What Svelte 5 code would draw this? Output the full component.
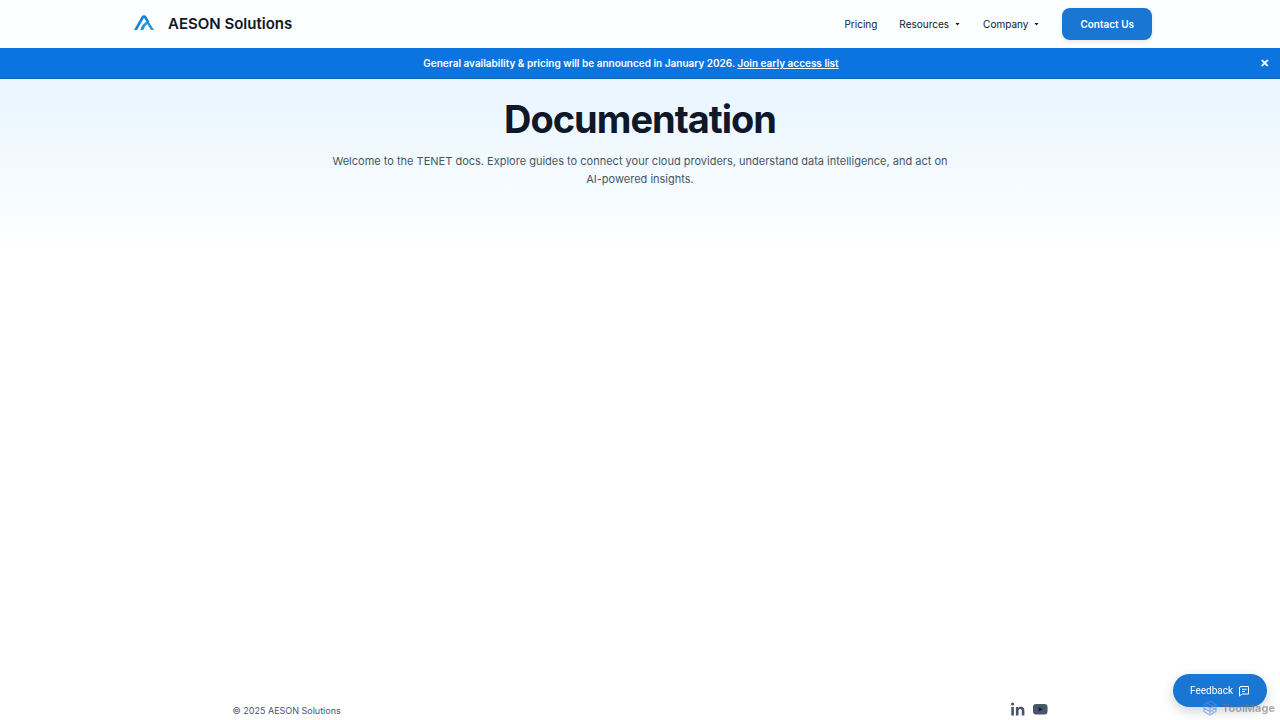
<script lang="ts">
  let bannerOpen = $state(true);

  const menus = ['Resources', 'Company'];
</script>

<div class="page">
  <header class="header">
    <nav class="nav" aria-label="Main">
      <a class="brand" href="/">
        <svg class="logo" viewBox="0 0 20 16" aria-hidden="true">
          <path
            d="M0 15 7.600 1.600Q8.400.3 10 .3t2.400 1.300L15.600 7l-2.700.5L10.300 3.200Q10 2.700 9.700 3.200L3 15z"
            fill="#1683d8"
          />
          <path
            d="M6.400 15Q7.600 8.700 14.200 6L20 15h-3L13.300 9.100Q10 11 9.300 15z"
            fill="#2194dc"
          />
        </svg>
        <span>AESON Solutions</span>
      </a>
      <div class="links">
        <a class="link" href="/pricing">Pricing</a>
        {#each menus as menu}
          <button class="link" type="button" aria-haspopup="true">
            {menu}
            <svg class="caret" viewBox="0 0 7 3" aria-hidden="true">
              <path d="M1.500 0h4l-2 2.500z" fill="currentColor" />
            </svg>
          </button>
        {/each}
        <a class="contact" href="/contact">Contact Us</a>
      </div>
    </nav>
  </header>

  {#if bannerOpen}
    <div class="banner">
      <p>
        General availability &amp; pricing will be announced in January 2026.
        <a href="/early-access">Join early access list</a>
      </p>
      <button class="close" type="button" aria-label="Dismiss" onclick={() => (bannerOpen = false)}>
        ✕
      </button>
    </div>
  {/if}

  <main class="hero">
    <h1>Documentation</h1>
    <p>
      Welcome to the TENET docs. Explore guides to connect your cloud providers, understand data
      intelligence, and act on AI-powered insights.
    </p>
  </main>

  <footer class="footer">
    <div class="footer-inner">
      <span>© 2025 AESON Solutions</span>
      <div class="social">
        <a href="/linkedin" aria-label="LinkedIn">
          <svg viewBox="0 0 16 16" fill="currentColor" aria-hidden="true">
            <circle cx="2.6" cy="3" r="1.6" />
            <path d="M1.3 6h2.6v8.5H1.3zM5.9 6h2.5v1.2C9 6.300 9.900 5.800 11.100 5.800c2.600 0 3.300 1.700 3.300 4v4.700h-2.600v-4.200c0-1.200-.2-2.200-1.500-2.200s-1.800 1-1.800 2.200v4.200H5.900z" />
          </svg>
        </a>
        <a href="/youtube" aria-label="YouTube">
          <svg viewBox="0 0 16 16" aria-hidden="true">
            <rect x="1" y="3" width="14.500" height="10.500" rx="3" fill="currentColor" />
            <path d="m6.800 6 4 2.250-4 2.250z" fill="#101a2b" />
          </svg>
        </a>
      </div>
    </div>
  </footer>

  <button class="feedback" type="button">
    Feedback
    <svg viewBox="0 0 12 12" fill="none" stroke="currentColor" aria-hidden="true">
      <path d="M3 1.500h7.500V9H4L1.500 11V3q0-1.500 1.500-1.500zM4 4.300h4.700M4 6.500h3" />
    </svg>
  </button>

  <div class="watermark" aria-hidden="true">
    <svg viewBox="0 0 16 16" fill="none" stroke="#5b8def" stroke-width="1.300">
      <path d="M8 1 14 4.500v7L8 15l-6-3.500v-7zM2 4.500l6 3.500 6-3.500M8 8v7M5 2.800l6 3.500v6.900M2 8l6 3.500L14 8" />
    </svg>
    <span>ToolMage</span>
  </div>
</div>

<style>
  :global(body) {
    margin: 0;
    background: #fff;
  }

  .page {
    display: flex;
    flex-direction: column;
    min-height: 100vh;
    font-family: Inter, 'Liberation Sans', sans-serif;
    font-size: 10px;
    color: #0f172a;
  }

  .page a {
    color: inherit;
  }

  .page button {
    border: 0;
    padding: 0;
    background: none;
    font: inherit;
    color: inherit;
    cursor: pointer;
  }

  .header {
    background: #fcfeff;
  }

  .nav {
    display: flex;
    align-items: center;
    justify-content: space-between;
    box-sizing: border-box;
    max-width: 1024px;
    height: 48px;
    margin: 0 auto;
    padding-left: 6px;
  }

  .brand {
    display: flex;
    align-items: center;
    gap: 14px;
    font-size: 15px;
    font-weight: 600;
    line-height: 18px;
    text-decoration: none;
  }

  .logo {
    width: 20px;
    height: 16px;
    padding-bottom: 2px;
  }

  .links {
    display: flex;
    align-items: center;
    gap: 22px;
  }

  .link {
    display: flex;
    align-items: center;
    gap: 5px;
    text-decoration: none;
  }

  .caret {
    width: 7px;
    height: 3px;
  }

  .page .contact {
    padding: 0 18px;
    border-radius: 8px;
    background: #1976d2;
    box-shadow: 0 2px 4px rgba(15, 23, 42, 0.1);
    color: #fff;
    font-weight: 600;
    line-height: 32px;
    text-decoration: none;
  }

  .banner {
    display: flex;
    align-items: center;
    box-sizing: border-box;
    height: 31px;
    padding-right: 11px;
    border-bottom: 1px solid #0a63bd;
    background: #0b74de;
    color: #fff;
    font-weight: 600;
  }

  .banner p {
    flex: 1;
    margin: 0;
    padding-left: 3px;
    text-align: center;
  }

  .page .close {
    width: 10px;
    font-size: 11px;
    font-weight: 700;
  }

  .hero {
    flex: 1;
    padding: 20px 24px;
    background: linear-gradient(#e8f5ff, #fff 180px);
    text-align: center;
  }

  .hero h1 {
    margin: 0 0 13px;
    font-size: 38px;
    font-weight: 700;
    line-height: 40px;
    letter-spacing: -1px;
  }

  .hero p {
    max-width: 620px;
    margin: 0 auto;
    color: #475569;
    font-size: 11px;
    line-height: 18px;
  }

  .footer {
    padding: 0 24px;
    color: #475569;
    font-size: 9px;
  }

  .footer-inner {
    display: flex;
    align-items: center;
    justify-content: space-between;
    max-width: 815px;
    height: 20px;
    margin: 0 auto;
  }

  .social {
    display: flex;
    gap: 6px;
    padding-bottom: 2px;
  }

  .social svg {
    display: block;
    width: 16px;
    height: 16px;
  }

  .page .feedback {
    position: fixed;
    right: 13px;
    bottom: 13px;
    display: flex;
    align-items: center;
    gap: 5px;
    height: 33px;
    padding: 0 17px;
    border-radius: 17px;
    background: #1976d2;
    box-shadow: 0 4px 12px rgba(15, 23, 42, 0.2);
    color: #fff;
    font-family: Roboto, sans-serif;
  }

  .feedback svg {
    width: 12px;
    height: 12px;
  }

  .watermark {
    position: fixed;
    right: 5px;
    bottom: 4px;
    display: flex;
    align-items: center;
    gap: 4px;
    color: #777;
    font-size: 11px;
    font-weight: 700;
    line-height: 16px;
    opacity: 0.6;
    pointer-events: none;
  }

  .watermark svg {
    width: 16px;
    height: 16px;
  }
</style>
